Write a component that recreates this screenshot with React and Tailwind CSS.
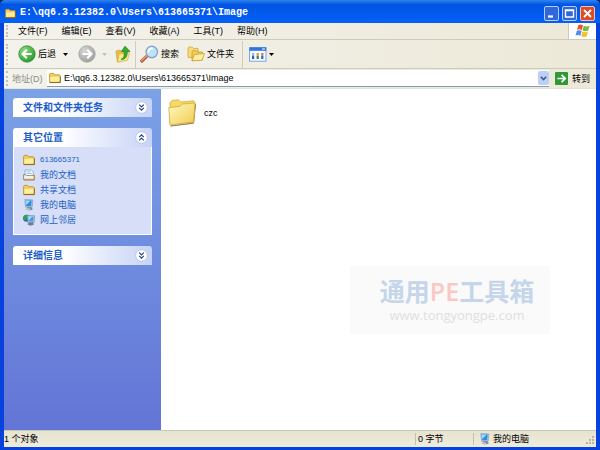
import React from 'react';

const menus = ['文件(F)', '编辑(E)', '查看(V)', '收藏(A)', '工具(T)', '帮助(H)'];

const places = [
  { name: '613665371', icon: FolderIcon, small: true },
  { name: '我的文档', icon: DocumentsIcon },
  { name: '共享文档', icon: FolderIcon },
  { name: '我的电脑', icon: ComputerIcon },
  { name: '网上邻居', icon: NetworkIcon },
];

function FolderIcon({ className }) {
  return (
    <svg viewBox="0 0 12 12" className={className} aria-hidden="true">
      <path d="M0.6 10.4V2.2L1.4 1.4H4.4L5.6 2.8H10.4L11 3.6V10.4Z" fill="#f3cf5b" stroke="#b98a1c" strokeWidth="0.8" />
      <path d="M1.4 5L10.6 4.6V9.4L1.4 9.8Z" fill="#fdeea0" />
      <path d="M0.8 10.6H11.4V4.4" fill="none" stroke="#8a6414" strokeWidth="0.9" />
    </svg>
  );
}

function DocumentsIcon({ className }) {
  return (
    <svg viewBox="0 0 12 12" className={className} aria-hidden="true">
      <path d="M2 7V1H8.4L10.2 2.6V8Z" fill="#fff" stroke="#6b93c4" strokeWidth="0.7" />
      <path d="M3.4 2.8H8M3.4 4.6H9" stroke="#8fc3ee" strokeWidth="1" />
      <path d="M0.6 10.8V5.6H2.8L3.8 6.6H11.2V10.8Z" fill="#e5e1d2" stroke="#7d7a68" strokeWidth="0.8" />
      <path d="M1.4 8H10.4" stroke="#fff" strokeWidth="1.2" />
      <path d="M11.4 6V11H1" fill="none" stroke="#c2912a" strokeWidth="0.9" />
    </svg>
  );
}

function ComputerIcon({ className }) {
  return (
    <svg viewBox="0 0 12 12" className={className} aria-hidden="true">
      <path d="M1.8 0.5L9.8 0.9L9.3 7.8L2.6 8.2Z" fill="#b7c8dd" stroke="#7d93b5" strokeWidth="0.6" />
      <path d="M2.6 1.3L8.6 1.6L8.2 6.9L3.2 7.2Z" fill="#2d8fe0" />
      <path d="M2.8 1.5L7.2 1.7L3.4 6Z" fill="#9be0fb" />
      <path d="M5 8H8.4L9.4 9.4L9.6 10.8L5.6 11.6L2.4 10.2Z" fill="#7e8ca6" />
      <path d="M3.2 9.9L7 10.3" stroke="#f4f6fa" strokeWidth="0.9" />
    </svg>
  );
}

function NetworkIcon({ className }) {
  return (
    <svg viewBox="0 0 12 12" className={className} aria-hidden="true">
      <circle cx="3.6" cy="4.2" r="3.5" fill="#2363b4" />
      <path d="M0.4 3.2C1.4 0.4 4.6 0.2 5.8 1.8L3.6 5L2 7Z" fill="#36a33a" />
      <path d="M4.2 1.4L11.6 1.8L11.2 8.4L4.8 8.6Z" fill="#c3d3e6" stroke="#6a7fa6" strokeWidth="0.6" />
      <path d="M5.2 2.4L10.6 2.7L10.2 7.4L5.6 7.6Z" fill="#3f9ce6" />
      <path d="M5.4 2.6L9 2.8L5.8 6.4Z" fill="#a9e4fb" />
      <path d="M6.2 8.6H10L11 10.6L7.4 11.8L4.2 10.2Z" fill="#6c7b98" />
    </svg>
  );
}

function ArrowCircle({ flip, from, to, edge }) {
  const id = flip ? 'circle-forward' : 'circle-back';
  return (
    <svg viewBox="0 0 18 18" className="size-[18px]" aria-hidden="true">
      <defs>
        <radialGradient id={id} cx="0.35" cy="0.3" r="0.8">
          <stop offset="0" stopColor={from} />
          <stop offset="1" stopColor={to} />
        </radialGradient>
      </defs>
      <circle cx="9" cy="9" r="8.2" fill={`url(#${id})`} stroke={edge} strokeWidth="0.8" />
      <path
        d={flip ? 'M4.4 9H13M9.2 4.8L13.4 9L9.2 13.2' : 'M13.6 9H5M8.8 4.8L4.6 9L8.8 13.2'}
        fill="none" stroke="#fff" strokeWidth="2.2"
      />
    </svg>
  );
}

function UpIcon() {
  return (
    <svg viewBox="0 0 16 18" className="w-4 h-[18px]" aria-hidden="true">
      <path d="M1 6L5 5L6.4 6.4L12 5.6L11.6 15L2.4 17Z" fill="#e9be48" stroke="#c4962c" strokeWidth="0.6" />
      <path d="M2.4 17L4 9L14.6 7.6L12.4 15.4Z" fill="#fce98d" stroke="#cfa136" strokeWidth="0.6" />
      <path d="M6 14.4C9 13.6 9.4 10.6 9.2 6.4H6.4L10 1.2L15 6.4H12.2C12.4 11.4 10.6 14.6 6 14.4Z" fill="#35ac2c" stroke="#1d7f1c" strokeWidth="0.7" />
    </svg>
  );
}

function SearchIcon() {
  return (
    <svg viewBox="0 0 19 18" className="w-[19px] h-[18px]" aria-hidden="true">
      <path d="M7.4 10.6L1.8 16" stroke="#b5573a" strokeWidth="3.2" strokeLinecap="round" />
      <path d="M7 10.4L1.6 15.4" stroke="#ee9f70" strokeWidth="1.4" strokeLinecap="round" />
      <circle cx="11.8" cy="7" r="5.7" fill="#bfe3fa" stroke="#86a5cc" strokeWidth="1.4" />
      <path d="M8.4 7C8.4 4.6 10 3.4 12 3.4" fill="none" stroke="#fff" strokeWidth="1.8" strokeLinecap="round" />
    </svg>
  );
}

function FoldersIcon() {
  return (
    <svg viewBox="0 0 18 16" className="w-[18px] h-4" aria-hidden="true">
      <path d="M1 11.4V2L2 1H5L6.4 2.4H11V11.4Z" fill="#f9dc75" stroke="#d3a33a" strokeWidth="0.8" />
      <path d="M5 14.6V5.4L6 4.6H9L10.2 6H15.4V14Z" fill="#f4cf5c" stroke="#cd9a2e" strokeWidth="0.8" />
      <path d="M5 14.8L7.4 8.4L17.4 7.6L15.2 14.2Z" fill="#fdf0a2" stroke="#cd9a2e" strokeWidth="0.8" />
    </svg>
  );
}

function ViewsIcon() {
  return (
    <svg viewBox="0 0 18 15" className="w-[18px] h-[15px]" aria-hidden="true">
      <rect x="0.6" y="0.6" width="16.4" height="13.6" fill="#f7fafe" stroke="#6c9be0" strokeWidth="0.9" />
      <rect x="0.4" y="0.4" width="16.8" height="3.4" fill="#2f74dc" />
      <path d="M13 2H16" stroke="#fff" strokeWidth="1" />
      <path d="M3 6H5.2V8.4H3Z" fill="#8fb4ea" />
      <path d="M3 8.6H5.2V12H3Z" fill="#2f62b8" />
      <path d="M7.6 6H9.8V8.4H7.6Z" fill="#e39a3a" />
      <path d="M7.6 8.6H9.8V12H7.6Z" fill="#4a7f4c" />
      <path d="M12.2 6H14.4V8.4H12.2Z" fill="#d7704c" />
      <path d="M12.2 8.6H14.4V12H12.2Z" fill="#2f62b8" />
    </svg>
  );
}

function Caret({ className }) {
  return (
    <svg viewBox="0 0 5 3" className={`w-[5px] h-[3px] ${className}`} aria-hidden="true">
      <path d="M0 0H5L2.5 3Z" fill="currentColor" />
    </svg>
  );
}

function WindowsLogo() {
  return (
    <svg viewBox="0 0 16 14" className="w-4 h-3.5" aria-hidden="true">
      <path d="M3.2 1.2C5 0.2 6.6 0.4 8 1.4L6.8 6.2C5.4 5.2 3.8 5 2 6Z" fill="#e8572a" />
      <path d="M8.8 1.8C10.6 2.8 12.4 2.8 14.6 1.8L13.2 6.6C11.2 7.6 9.4 7.6 7.6 6.6Z" fill="#7cb83c" />
      <path d="M1.8 6.8C3.6 5.8 5.2 6 6.6 7L5.4 11.8C4 10.8 2.4 10.6 0.6 11.6Z" fill="#4d8fe0" />
      <path d="M7.4 7.4C9.2 8.4 11 8.4 13 7.4L11.8 12.2C9.8 13.2 8 13.2 6.2 12.2Z" fill="#f6bf32" />
    </svg>
  );
}

function LargeFolder() {
  return (
    <svg viewBox="0 0 28 28" className="size-7" aria-hidden="true">
      <defs>
        <linearGradient id="folder-front" x1="0" y1="0" x2="1" y2="1">
          <stop offset="0" stopColor="#fffac4" />
          <stop offset="1" stopColor="#f2cb4c" />
        </linearGradient>
      </defs>
      <path d="M2.6 27L25.6 24.2L27.6 5L25 24Z" fill="#8d8356" stroke="#8d8356" strokeWidth="0.8" />
      <path d="M2 25V3.6L4 1.4L10.4 0.8L12.8 3L25.6 1.8L26.8 3.4L25.8 23Z" fill="#f5d865" stroke="#d6ac3c" strokeWidth="0.8" />
      <path d="M2 26L0.8 8.6L12 7.4L14.4 5L27 4L25.4 23Z" fill="url(#folder-front)" stroke="#d3a93a" strokeWidth="0.8" />
    </svg>
  );
}

function Grip() {
  return <span className="w-0.5 h-3/4 shrink-0 border-l-2 border-dotted border-[#c4c1ae]" />;
}

function PanelHeader({ title, open }) {
  return (
    <button type="button" aria-expanded={open}
      className="flex w-full h-[19px] items-center justify-between rounded-t-[3px] bg-linear-to-r from-white from-35% to-[#c6d3f7] pl-2.5 pr-1 text-[10px] font-bold text-[#215dc6]">
      {title}
      <svg viewBox="0 0 13 13" className="size-[13px]" aria-hidden="true">
        <circle cx="6.5" cy="6.5" r="5.8" fill="#fff" stroke="#b3bfdf" strokeWidth="0.8" />
        <path
          d={open ? 'M4.2 6.2L6.5 3.9L8.8 6.2M4.2 9.4L6.5 7.1L8.8 9.4' : 'M4.2 3.6L6.5 5.9L8.8 3.6M4.2 6.8L6.5 9.1L8.8 6.8'}
          fill="none" stroke="#26418f" strokeWidth="1.2"
        />
      </svg>
    </button>
  );
}

function TitleBar() {
  return (
    <header className="flex h-[23px] items-center gap-1 rounded-t-[5px] bg-linear-to-b from-[#2f83ee] from-0% via-[#0054e3] via-20% to-[#0560f8] px-[5px] pt-[3px]">
      <FolderIcon className="size-[11px]" />
      <h1 className="flex-1 truncate font-['Liberation_Mono'] text-[10px] font-bold text-white">
        E:\qq6.3.12382.0\Users\613665371\Image
      </h1>
      <div className="flex gap-[3px]">
        <button type="button" aria-label="最小化" className="size-[15px] rounded-[2px] border border-[#b9cdf5] bg-[#3167dd]">
          <svg viewBox="0 0 13 13" aria-hidden="true"><path d="M3 9.5H8" stroke="#fff" strokeWidth="2.2" /></svg>
        </button>
        <button type="button" aria-label="最大化" className="size-[15px] rounded-[2px] border border-[#b9cdf5] bg-[#3167dd]">
          <svg viewBox="0 0 13 13" aria-hidden="true"><path d="M2.5 3H10.5V10H2.5ZM2.5 3.6H10.5" fill="none" stroke="#fff" strokeWidth="1.4" /></svg>
        </button>
        <button type="button" aria-label="关闭" className="size-[15px] rounded-[2px] border border-[#f0c3b8] bg-[#dc4c27]">
          <svg viewBox="0 0 13 13" aria-hidden="true"><path d="M3 3L10 10M10 3L3 10" stroke="#fff" strokeWidth="1.8" /></svg>
        </button>
      </div>
    </header>
  );
}

function Toolbar() {
  return (
    <div className="flex h-[29px] items-center border-b border-[#cdcab8] pl-0.5">
      <Grip />
      <button type="button" className="ml-2.5 flex items-center gap-0.5">
        <ArrowCircle from="#8fdc7e" to="#1f9426" edge="#33903a" />
        后退
      </button>
      <button type="button" aria-label="后退列表" className="ml-[7px]"><Caret className="text-black" /></button>
      <button type="button" aria-label="前进" className="ml-2.5"><ArrowCircle flip from="#d6d6d4" to="#9c9c9a" edge="#a2a2a0" /></button>
      <button type="button" aria-label="前进列表" className="ml-1.5"><Caret className="text-[#c5c2b4]" /></button>
      <button type="button" aria-label="向上" className="ml-2"><UpIcon /></button>
      <span className="ml-1 h-[27px] w-px bg-[#cfccba]" />
      <button type="button" className="ml-1 flex items-center gap-0.5"><SearchIcon />搜索</button>
      <button type="button" className="ml-2 flex items-center gap-0.5"><FoldersIcon />文件夹</button>
      <span className="ml-2 h-[27px] w-px bg-[#cfccba]" />
      <button type="button" aria-label="查看方式" className="ml-1.5 flex items-center gap-0.5">
        <ViewsIcon />
        <Caret className="text-black" />
      </button>
    </div>
  );
}

function AddressBar() {
  return (
    <form className="flex h-5 items-center border-b border-[#e6e2cf] pl-0.5" onSubmit={e => e.preventDefault()}>
      <Grip />
      <label htmlFor="address" className="ml-1 w-[35px] text-[#8c8a7c]">地址(D)</label>
      <div className="flex h-[17px] flex-1 items-center border-b border-[#7f9db9] bg-white pl-0.5">
        <FolderIcon className="size-3" />
        <input id="address" type="text" defaultValue="E:\qq6.3.12382.0\Users\613665371\Image"
          className="ml-[3px] h-4 min-w-0 flex-1 text-[9px] text-black outline-none" />
        <button type="button" aria-label="地址列表" className="flex h-3.5 w-[11px] items-center justify-center rounded-[2px] bg-[#bccff8] text-[#41597f]">
          <svg viewBox="0 0 7 5" className="h-[5px] w-[7px]" aria-hidden="true"><path d="M0.8 0.8L3.5 3.5L6.2 0.8" fill="none" stroke="currentColor" strokeWidth="1.6" /></svg>
        </button>
      </div>
      <button type="submit" className="ml-1.5 mr-1.5 flex items-center gap-1">
        <svg viewBox="0 0 13 13" className="size-[13px]" aria-hidden="true">
          <rect width="13" height="13" rx="1" fill="#2f9a35" />
          <path d="M2.4 6.5H10M6.6 2.8L10.3 6.5L6.6 10.2" fill="none" stroke="#fff" strokeWidth="1.7" />
        </svg>
        转到
      </button>
    </form>
  );
}

function Sidebar() {
  return (
    <aside className="flex w-[157px] shrink-0 flex-col gap-[11px] bg-linear-to-b from-[#7ba2e7] to-[#6375d6] px-[9px] pt-[9px]">
      <PanelHeader title="文件和文件夹任务" open={false} />
      <section>
        <PanelHeader title="其它位置" open />
        <ul className="border border-t-0 border-white bg-[#d6dff7] pt-[5px] pb-[7px] pl-[9px]">
          {places.map(({ name, icon: Icon, small }) => (
            <li key={name} className="h-[15px]">
              <a href="#" className="flex h-full items-center gap-[5px] text-[#215dc6]">
                <Icon className="size-3" />
                <span className={small ? 'text-[8px]' : 'text-[9px]'}>{name}</span>
              </a>
            </li>
          ))}
        </ul>
      </section>
      <PanelHeader title="详细信息" open={false} />
    </aside>
  );
}

function Watermark() {
  return (
    <div className="pointer-events-none absolute right-[46px] bottom-24 flex h-[68px] w-[200px] flex-col items-center justify-center bg-[#fafafb] pl-3.5">
      <p className="text-[25px] leading-7 font-bold whitespace-nowrap text-[#c5d6ea]">
        通用<span className="font-['Open_Sans'] font-semibold text-[#fbc8c2]">PE</span>工具箱
      </p>
      <p className="font-['Open_Sans'] text-[13px] leading-[18px] text-[#dfdfe1]">www.tongyongpe.com</p>
    </div>
  );
}

export default function App() {
  return (
    <div className="flex min-h-screen flex-col bg-[#0a246a] font-['Liberation_Sans','Noto_Sans_CJK_SC',sans-serif] text-[9px] leading-3 text-black">
      <TitleBar />
      <div className="flex flex-1 flex-col border-x-4 border-b-[3px] border-[#0842dc] bg-[#ece9d8]">
        <div className="bg-linear-to-r from-[#f3f2ec] to-[#ece9d8]">
          <nav className="flex h-[17px] items-center border-b border-[#cdcab8] pl-0.5">
            <Grip />
            <div className="ml-[3px] flex flex-1">
              {menus.map(m => <button key={m} type="button" className="px-[7px]">{m}</button>)}
            </div>
            <div className="flex h-full w-7 items-center justify-center border-l border-[#cdcab8] bg-white"><WindowsLogo /></div>
          </nav>
          <Toolbar />
          <AddressBar />
        </div>

        <div className="flex flex-1">
          <Sidebar />
          <main className="relative flex-1 bg-white pl-[7px] pt-2.5">
            <button type="button" className="flex items-center gap-2"><LargeFolder />czc</button>
            <Watermark />
          </main>
        </div>

        <footer className="flex h-[17px] items-center border-t border-[#c9c6b4] bg-linear-to-b from-[#e6e3d0] to-[#efecdd]">
          <span className="flex-1">1 个对象</span>
          <span className="w-[58px] border-l border-[#c4c1ae] pl-0.5">0 字节</span>
          <span className="flex w-[123px] items-center gap-0.5 border-l border-[#c4c1ae] pl-[5px]">
            <ComputerIcon className="size-3" />
            <span className="flex-1">我的电脑</span>
            <svg viewBox="0 0 9 9" className="mr-px size-[9px] self-end" aria-hidden="true">
              <path d="M6 0H8V2H6ZM3 3H5V5H3ZM6 3H8V5H6ZM0 6H2V8H0ZM3 6H5V8H3ZM6 6H8V8H6Z" fill="#b8b5a2" />
            </svg>
          </span>
        </footer>
      </div>
    </div>
  );
}
